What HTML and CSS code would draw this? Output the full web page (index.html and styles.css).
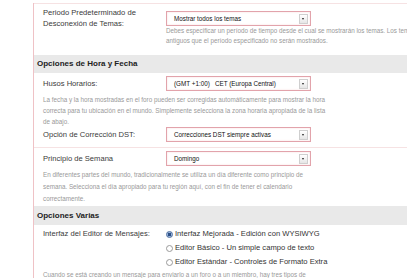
FILE: index.html
```html
<!DOCTYPE html>
<html lang="es">
<head>
  <meta charset="UTF-8" />
  <title>Opciones</title>
  <link rel="stylesheet" href="styles.css">
</head>
<body>
  <div id="panel">
    <div class="row first rule">
      <div class="label">Periodo Predeterminado de<br>Desconexión de Temas:</div>
      <div class="field">
        <div class="select">Mostrar todos los temas<span class="arrow"></span></div>
        <p class="hint">Debes especificar un período de tiempo desde el cual se mostrarán los temas. Los temas más<br>antiguos que el período especificado no serán mostrados.</p>
      </div>
    </div>

    <h3 class="section">Opciones de Hora y Fecha</h3>

    <div class="row zone">
      <div class="label">Husos Horarios:</div>
      <div class="select">(GMT +1:00)&nbsp;&nbsp; CET (Europa Central)<span class="arrow"></span></div>
    </div>
    <p class="hint wide zone-hint">La fecha y la hora mostradas en el foro pueden ser corregidas automáticamente para mostrar la hora<br>correcta para tu ubicación en el mundo. Simplemente selecciona la zona horaria apropiada de la lista<br>de abajo.</p>

    <div class="row dst">
      <div class="label">Opción de Corrección DST:</div>
      <div class="select">Correcciones DST siempre activas<span class="arrow"></span></div>
    </div>

    <div class="row rule week">
      <div class="label">Principio de Semana</div>
      <div class="select">Domingo<span class="arrow"></span></div>
    </div>
    <p class="hint wide week-hint">En diferentes partes del mundo, tradicionalmente se utiliza un día diferente como principio de<br>semana. Selecciona el día apropiado para tu región aquí, con el fin de tener el calendario<br>correctamente.</p>

    <h3 class="section tall">Opciones Varias</h3>

    <div class="row editor">
      <div class="label">Interfaz del Editor de Mensajes:</div>
      <div class="radios">
        <label class="radio"><span class="dot on"></span>Interfaz Mejorada - Edición con WYSIWYG</label>
        <label class="radio"><span class="dot"></span>Editor Básico - Un simple campo de texto</label>
        <label class="radio"><span class="dot"></span>Editor Estándar - Controles de Formato Extra</label>
      </div>
    </div>
    <p class="hint wide">Cuando se está creando un mensaje para enviarlo a un foro o a un miembro, hay tres tipos de</p>
  </div>
</body>
</html>
```

FILE: styles.css
```css
body {
  margin: 0;
  background-color: #fff;
  font-family: "Liberation Sans", Arial, sans-serif;
  color: #333;
  overflow: hidden;
}

#panel {
  margin-left: 33px;
  width: 440px;
  border-left: 1px solid #efc2c6;
  min-height: 278px;
}

.row {
  display: flex;
  align-items: center;
  padding-left: 9px;
}

.rule {
  border-top: 1px solid #f6e2e3;
}

.row.first {
  margin-top: 3px;
  align-items: flex-start;
  padding-top: 2px;
}

.row.first .label {
  padding-top: 1px;
}

.row.first .field {
  padding-top: 5px;
}

.label {
  width: 123px;
  flex-shrink: 0;
  font-size: 7.6px;
  line-height: 11px;
  color: #3a3a3a;
}

.select {
  position: relative;
  width: 136px;
  height: 13px;
  border: 1px solid #e2a3ab;
  background-color: #fff;
  box-shadow: inset 0 0 2px #f7dada;
  font-size: 6.3px;
  line-height: 13px;
  padding-left: 7px;
  color: #111;
}

.arrow {
  position: absolute;
  right: 2px;
  top: 2px;
  width: 7px;
  height: 8px;
  border: 1px solid #cfcfcf;
  background: linear-gradient(#fff, #e6e6e6);
}

.arrow::after {
  content: "";
  position: absolute;
  left: 2px;
  top: 3px;
  border-left: 1.5px solid transparent;
  border-right: 1.5px solid transparent;
  border-top: 2px solid #222;
}

.hint {
  margin: 0;
  font-size: 6.3px;
  line-height: 10px;
  color: #999;
  white-space: nowrap;
}

.hint.wide {
  padding-left: 9px;
  line-height: 11px;
}

.row.first .hint {
  margin-bottom: 9px;
}

.section {
  margin: 0;
  background-color: #e9e9e9;
  font-size: 8px;
  font-weight: bold;
  color: #222;
  height: 18px;
  line-height: 18px;
  padding-left: 3px;
}

.section.tall {
  margin-top: 1px;
  height: 19px;
  line-height: 19px;
}

.row.zone {
  padding-top: 3px;
}

.zone-hint {
  margin-top: 3px;
}

.row.week {
  margin-top: 5px;
  padding-top: 3px;
}

.week-hint.hint.wide {
  margin-top: 3px;
  line-height: 12px;
}

.row.editor {
  align-items: flex-start;
  padding-top: 2px;
}

.row.editor .label {
  line-height: 14px;
}

.radios {
  display: flex;
  flex-direction: column;
}

.radio {
  display: flex;
  align-items: center;
  gap: 2px;
  font-size: 7.6px;
  line-height: 14px;
  color: #333;
}

.dot {
  width: 5px;
  height: 5px;
  border: 1px solid #9a9a9a;
  border-radius: 50%;
  background-color: #fff;
}

.dot.on {
  border-color: #4d6f9e;
  background: radial-gradient(circle, #2b4f86 0 1.5px, #9db6dc 2px);
}
```
